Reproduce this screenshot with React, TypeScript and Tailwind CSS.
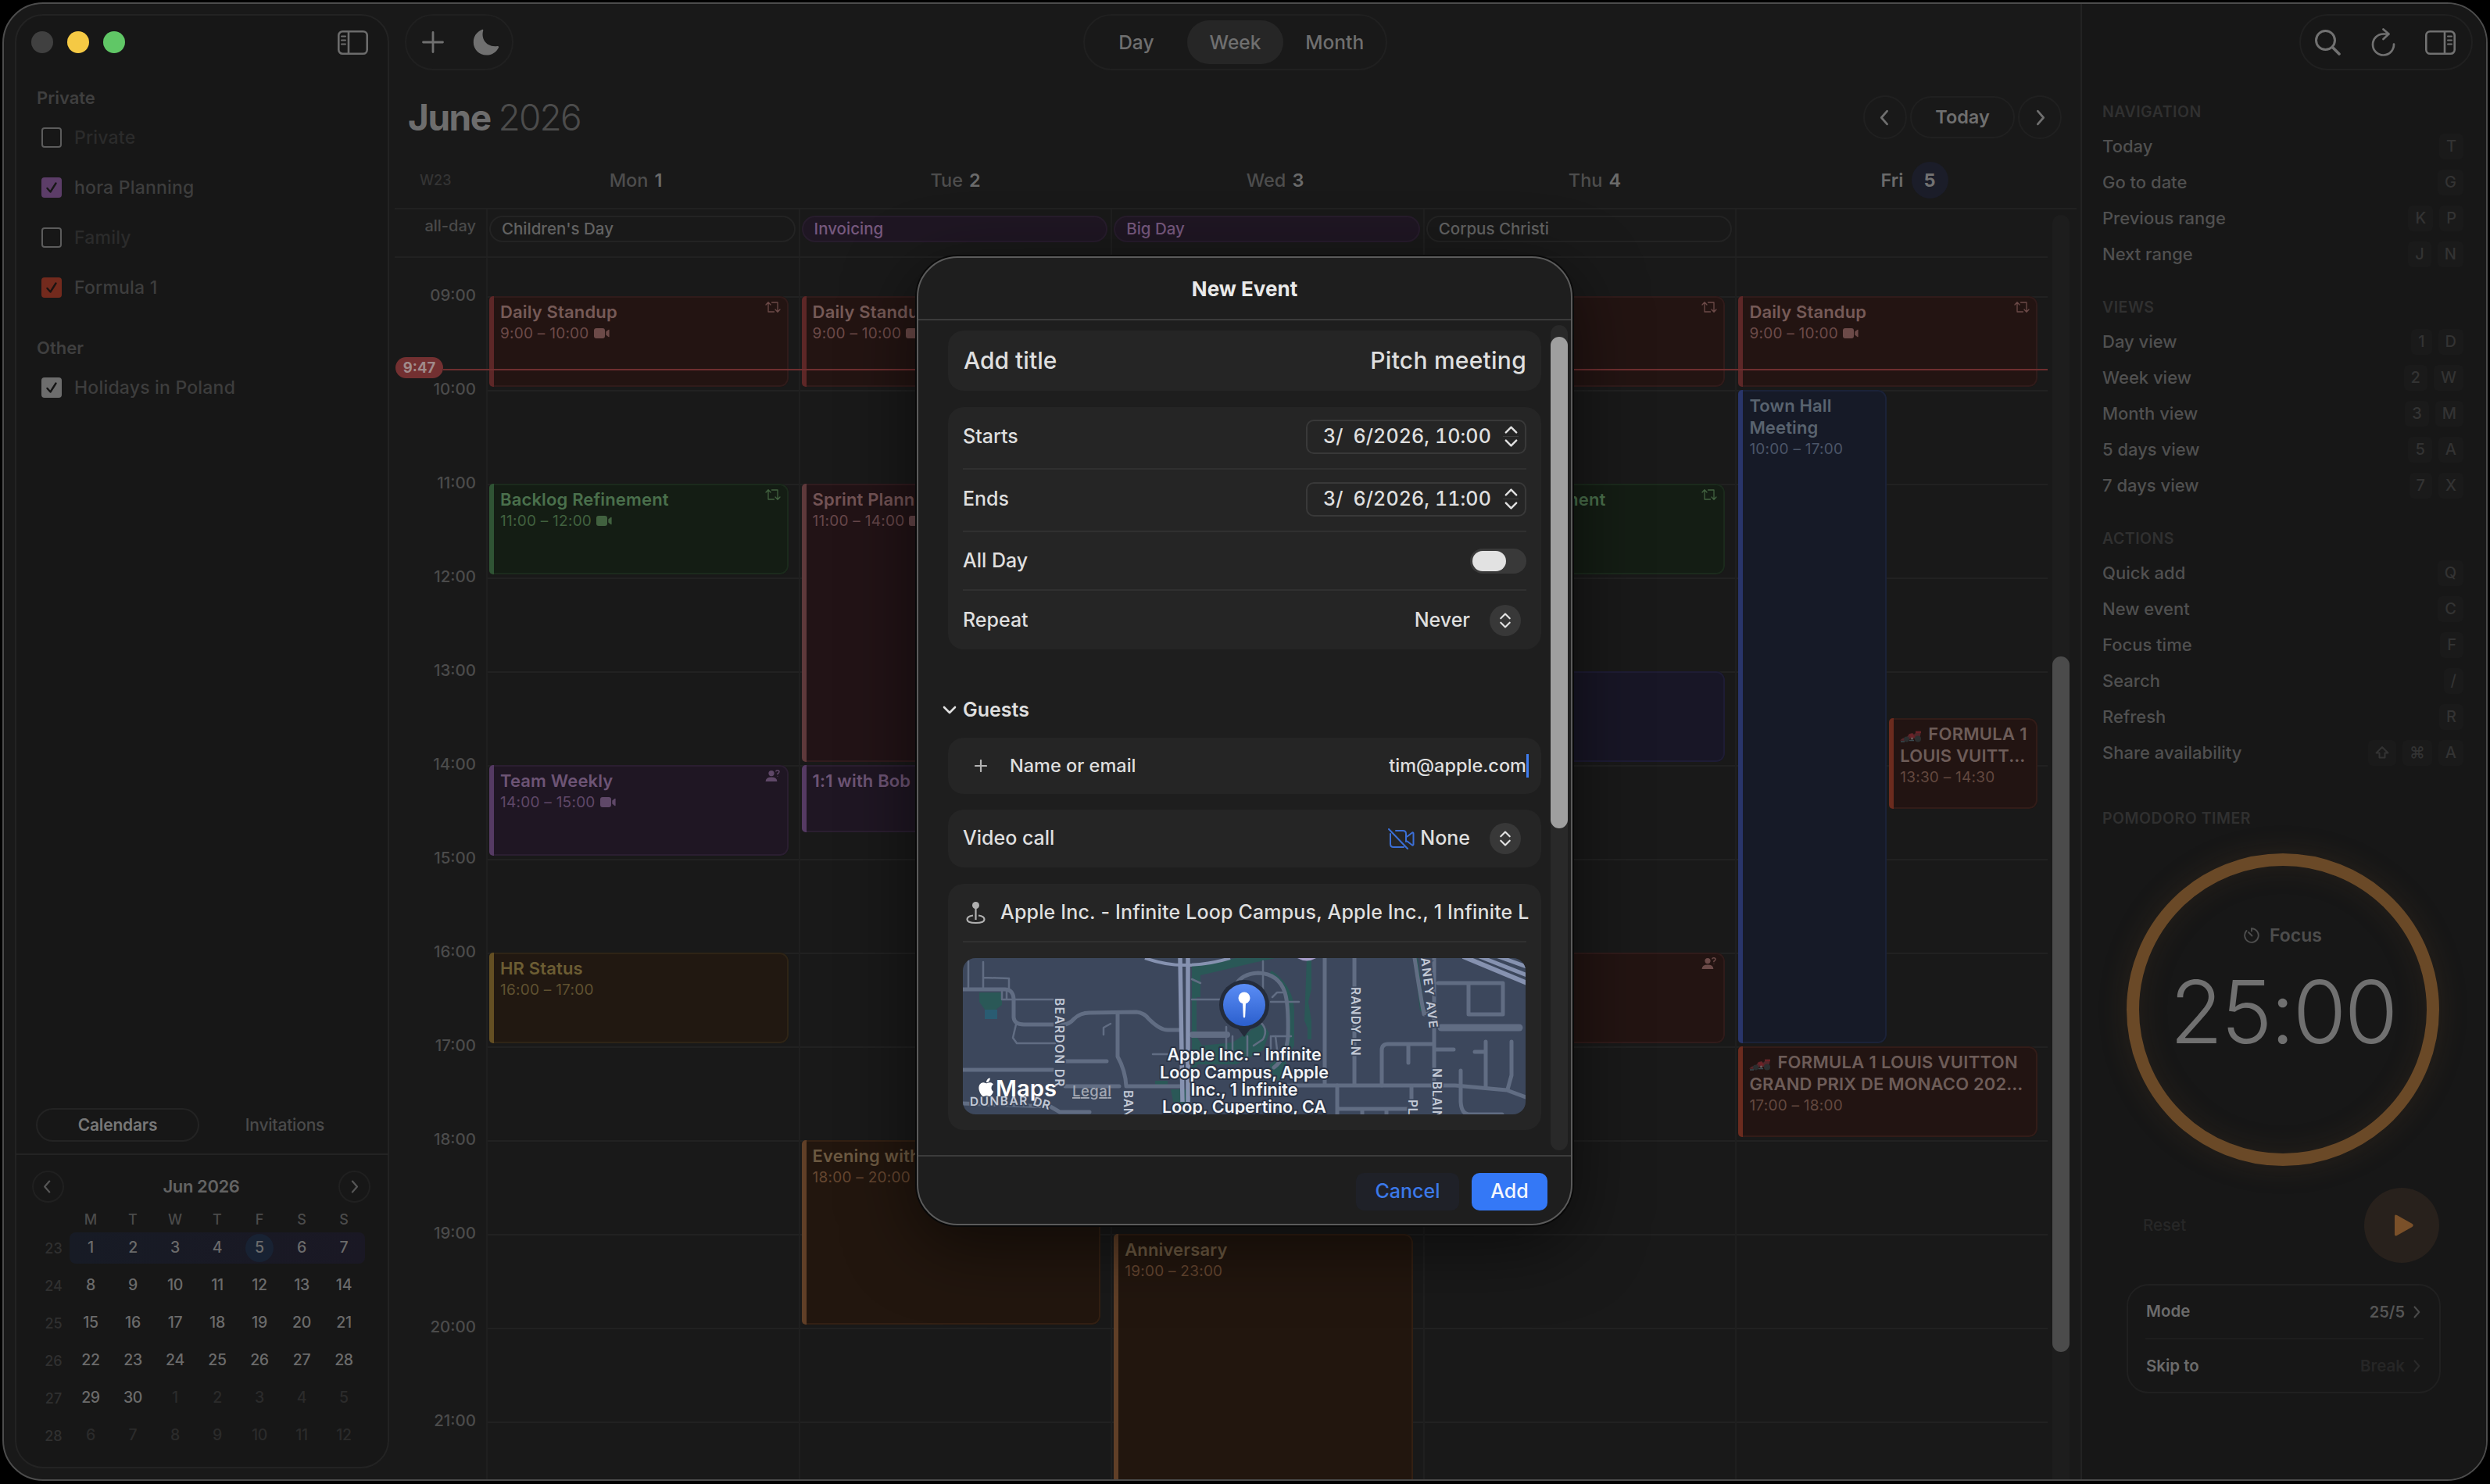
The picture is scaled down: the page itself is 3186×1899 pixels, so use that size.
import type { ReactNode } from 'react'

type Tone = {
  bg: string
  border: string
  bar: string
  title: string
  time: string
}

const TONES: Record<string, Tone> = {
  red: { bg: 'bg-[#231412]', border: 'border-[#301b1a]', bar: 'bg-[#5d2727]', title: 'text-[#765a57]', time: 'text-[#6c4a48]' },
  green: { bg: 'bg-[#141d14]', border: 'border-[#1b2a1c]', bar: 'bg-[#2f5434]', title: 'text-[#4a704c]', time: 'text-[#41613f]' },
  rose: { bg: 'bg-[#221316]', border: 'border-[#301b1e]', bar: 'bg-[#5e393b]', title: 'text-[#735355]', time: 'text-[#67474a]' },
  purple: { bg: 'bg-[#1f1623]', border: 'border-[#2a1e30]', bar: 'bg-[#553a63]', title: 'text-[#6d5475]', time: 'text-[#5f4868]' },
  yellow: { bg: 'bg-[#211811]', border: 'border-[#2e2416]', bar: 'bg-[#644f23]', title: 'text-[#6c5d33]', time: 'text-[#5f5130]' },
  orange: { bg: 'bg-[#22160e]', border: 'border-[#332013]', bar: 'bg-[#603f27]', title: 'text-[#6c5941]', time: 'text-[#654630]' },
  blue: { bg: 'bg-[#161a27]', border: 'border-[#1b2238]', bar: 'bg-[#29356a]', title: 'text-[#59636f]', time: 'text-[#4b5568]' },
  indigo: { bg: 'bg-[#181626]', border: 'border-[#1e1c34]', bar: 'bg-[#2b2860]', title: 'text-[#59597a]', time: 'text-[#4b4b68]' },
  f1: { bg: 'bg-[#221412]', border: 'border-[#321c18]', bar: 'bg-[#6b2b1e]', title: 'text-[#6d5c58]', time: 'text-[#62483f]' },
}

type CalEvent = {
  title: string
  /* second title line, cut with an ellipsis */
  more?: string
  time: string
  start: number
  hours: number
  tone: keyof typeof TONES
  half?: 'left' | 'right'
  video?: boolean
  badge?: 'repeat' | 'guest'
}

const DAYS: { name: string; num: string; allDay?: string; purple?: boolean; events: CalEvent[] }[] = [
  {
    name: 'Mon',
    num: '1',
    allDay: "Children's Day",
    events: [
      { title: 'Daily Standup', time: '9:00 – 10:00', start: 9, hours: 1, tone: 'red', video: true, badge: 'repeat' },
      { title: 'Backlog Refinement', time: '11:00 – 12:00', start: 11, hours: 1, tone: 'green', video: true, badge: 'repeat' },
      { title: 'Team Weekly', time: '14:00 – 15:00', start: 14, hours: 1, tone: 'purple', video: true, badge: 'guest' },
      { title: 'HR Status', time: '16:00 – 17:00', start: 16, hours: 1, tone: 'yellow' },
    ],
  },
  {
    name: 'Tue',
    num: '2',
    allDay: 'Invoicing',
    purple: true,
    events: [
      { title: 'Daily Standup', time: '9:00 – 10:00', start: 9, hours: 1, tone: 'red', video: true, badge: 'repeat' },
      { title: 'Sprint Planning', time: '11:00 – 14:00', start: 11, hours: 3, tone: 'rose', video: true },
      { title: '1:1 with Bob', time: '', start: 14, hours: 0.75, tone: 'purple' },
      { title: 'Evening with', time: '18:00 – 20:00', start: 18, hours: 2, tone: 'orange' },
    ],
  },
  {
    name: 'Wed',
    num: '3',
    allDay: 'Big Day',
    purple: true,
    events: [{ title: 'Anniversary', time: '19:00 – 23:00', start: 19, hours: 4, tone: 'orange' }],
  },
  {
    name: 'Thu',
    num: '4',
    allDay: 'Corpus Christi',
    events: [
      { title: 'Daily Standup', time: '9:00 – 10:00', start: 9, hours: 1, tone: 'red', badge: 'repeat' },
      { title: 'Backlog Refinement', time: '11:00 – 12:00', start: 11, hours: 1, tone: 'green', badge: 'repeat' },
      { title: '', time: '', start: 13, hours: 1, tone: 'indigo' },
      { title: '', time: '', start: 16, hours: 1, tone: 'red', badge: 'guest' },
    ],
  },
  {
    name: 'Fri',
    num: '5',
    events: [
      { title: 'Daily Standup', time: '9:00 – 10:00', start: 9, hours: 1, tone: 'red', video: true, badge: 'repeat' },
      { title: 'Town Hall Meeting', time: '10:00 – 17:00', start: 10, hours: 7, tone: 'blue', half: 'left' },
      { title: 'FORMULA 1', more: 'LOUIS VUITTON GRAND PRIX', time: '13:30 – 14:30', start: 13.5, hours: 1, tone: 'f1', half: 'right' },
      { title: 'FORMULA 1 LOUIS VUITTON', more: 'GRAND PRIX DE MONACO 2026 - Practice 2', time: '17:00 – 18:00', start: 17, hours: 1, tone: 'f1' },
    ],
  },
]

const HOURS = ['09:00', '10:00', '11:00', '12:00', '13:00', '14:00', '15:00', '16:00', '17:00', '18:00', '19:00', '20:00', '21:00']

const CALENDARS = [
  { group: 'Private', items: [
    { name: 'Private', box: 'border-2 border-[#5c5c5c]', text: 'text-[#2b2b2b]', tick: '' },
    { name: 'hora Planning', box: 'bg-[#5c3d68]', text: 'text-[#3d3d3d]', tick: '#181818' },
    { name: 'Family', box: 'border-2 border-[#5c5c5c]', text: 'text-[#2b2b2b]', tick: '' },
    { name: 'Formula 1', box: 'bg-[#732a1d]', text: 'text-[#3d3d3d]', tick: '#1c1412' },
  ] },
  { group: 'Other', items: [
    { name: 'Holidays in Poland', box: 'bg-[#6d6d6d]', text: 'text-[#3d3d3d]', tick: '#141414' },
  ] },
]

const WEEKS: [string, string[]][] = [
  ['23', ['1', '2', '3', '4', '5', '6', '7']],
  ['24', ['8', '9', '10', '11', '12', '13', '14']],
  ['25', ['15', '16', '17', '18', '19', '20', '21']],
  ['26', ['22', '23', '24', '25', '26', '27', '28']],
  ['27', ['29', '30', '1', '2', '3', '4', '5']],
  ['28', ['6', '7', '8', '9', '10', '11', '12']],
]

const SHORTCUTS: { title: string; rows: [string, string[]][] }[] = [
  { title: 'NAVIGATION', rows: [['Today', ['T']], ['Go to date', ['G']], ['Previous range', ['K', 'P']], ['Next range', ['J', 'N']]] },
  { title: 'VIEWS', rows: [['Day view', ['1', 'D']], ['Week view', ['2', 'W']], ['Month view', ['3', 'M']], ['5 days view', ['5', 'A']], ['7 days view', ['7', 'X']]] },
  { title: 'ACTIONS', rows: [['Quick add', ['Q']], ['New event', ['C']], ['Focus time', ['F']], ['Search', ['/']], ['Refresh', ['R']], ['Share availability', ['shift', 'cmd', 'A']]] },
]

function Chevron({ dir, className }: { dir: 'left' | 'right' | 'up' | 'down'; className: string }) {
  const d = {
    left: 'M13 3 L6 11 L13 19',
    right: 'M8 3 L15 11 L8 19',
    up: 'M4 15 L11 8 L18 15',
    down: 'M4 7 L11 14 L18 7',
  }[dir]
  return (
    <svg viewBox="0 0 22 22" className={className} fill="none" stroke="currentColor" strokeWidth="2.6" strokeLinecap="round" strokeLinejoin="round">
      <path d={d} />
    </svg>
  )
}

function PanelIcon({ side }: { side: 'left' | 'right' }) {
  const flip = side === 'right' ? 'scale-x-[-1]' : ''
  return (
    <svg viewBox="0 0 39 31" className={`w-[39px] h-[31px] ${flip}`} fill="none" stroke="currentColor" strokeWidth="2.6">
      <rect x="1.3" y="1.3" width="36.4" height="28.4" rx="5" />
      <path d="M14 1.3 V29.7" />
      <path d="M5 7.5 H10 M5 12.5 H10 M5 17.5 H10" strokeWidth="2" strokeLinecap="round" />
    </svg>
  )
}

function VideoIcon() {
  return (
    <svg viewBox="0 0 20 13" className="w-5 h-[13px]" fill="currentColor">
      <rect x="0" y="0" width="14" height="13" rx="3" />
      <path d="M15.3 4.6 L18.4 2 Q19.6 1.2 19.6 2.6 V10.4 Q19.6 11.8 18.4 11 L15.3 8.4 Z" />
    </svg>
  )
}

function RepeatIcon() {
  return (
    <svg viewBox="0 0 20 16" className="w-5 h-4" fill="none" stroke="currentColor" strokeWidth="1.3" strokeLinecap="round" strokeLinejoin="round">
      <path d="M1 5 L4 1.8 L7 5 M4 2 V14 H11.5" />
      <path d="M8.5 2 H16 V14 M13 11 L16 14.2 L19 11" />
    </svg>
  )
}

function GuestIcon() {
  return (
    <svg viewBox="0 0 20 16" className="w-5 h-4" fill="currentColor">
      <circle cx="8" cy="4.6" r="3.6" />
      <path d="M0.6 15 Q1 9.6 8 9.6 Q15 9.6 15.4 15 Z" />
      <path d="M13.6 2.4 Q14 0.8 15.8 0.8 Q18 0.8 18 2.6 Q18 4 15.9 5.2 V6.2 M15.9 8.2 V8.7" fill="none" stroke="currentColor" strokeWidth="1.5" />
    </svg>
  )
}

function CarIcon() {
  return (
    <svg viewBox="0 0 28 16" className="w-7 h-4 mr-[8px] mt-[9px] shrink-0">
      <path d="M0 13.5 L3 11 L9 9 L12 5 L16 4 L18 6 L20 4 V1.5 H27 L26.5 5 L25 11 H14 L6 14 Z" fill="#52262a" />
      <path d="M11 6 L16 4.5 L19 9 L15 11 Z M20 2 H27 V4 H20 Z" fill="#6b2227" />
      <circle cx="8.5" cy="12" r="3.4" fill="#2b2e2f" />
      <circle cx="23" cy="11.5" r="4" fill="#2b2e2f" />
      <circle cx="15.5" cy="11" r="1.5" fill="#6b5a5a" />
      <path d="M1 15 H6 M12 13.5 H18" stroke="#3b4a50" strokeWidth="1.5" />
    </svg>
  )
}

function EventCard({ event }: { event: CalEvent }) {
  const tone = TONES[event.tone]
  const column = event.half === 'left' ? 'col-start-1' : event.half === 'right' ? 'col-start-2' : 'col-span-2 col-start-1'
  const row = Math.round((event.start - 9) * 4) + 1
  return (
    <div
      className={`${column} ${tone.bg} flex min-w-0 mb-1 mr-[3px] rounded-l-[5px] rounded-r-[11px] overflow-hidden`}
      style={{ gridRow: `${row} / span ${event.hours * 4}` }}
    >
      <div className={`w-1.5 shrink-0 ${tone.bar}`} />
      <div className={`flex flex-1 min-w-0 pl-2 pr-2 pt-[3px] border-y-2 border-r-2 rounded-r-[11px] ${tone.border}`}>
        <div className="flex-1 min-w-0 pt-px">
          <div className={`text-[22px] leading-[28px] tracking-[0.15px] font-semibold ${tone.title}`}>
            {event.more ? (
              <>
                <div className="flex whitespace-nowrap tracking-[0.3px]"><CarIcon />{event.title}</div>
                <div className="truncate">{event.more}</div>
              </>
            ) : (
              event.title
            )}
          </div>
          <div className={`flex items-center gap-[6px] text-[19px] leading-[27px] tracking-[0.25px] ${tone.time}`}>
            {event.time}
            {event.video && <VideoIcon />}
          </div>
        </div>
        {event.badge && (
          <div className={`shrink-0 pt-px ${tone.time}`}>{event.badge === 'repeat' ? <RepeatIcon /> : <GuestIcon />}</div>
        )}
      </div>
    </div>
  )
}

function Sidebar() {
  return (
    <aside className="flex flex-col w-[479px] h-[1861px] mt-[13px] ml-[14px] shrink-0 rounded-[36px] border-2 border-[#232323] bg-[#171717]">
      <div className="flex items-center h-[68px] pl-[19px] pr-[25px]">
        <div className="size-7 rounded-full bg-[#404040]" />
        <div className="size-7 ml-[18px] rounded-full bg-[#f5c944]" />
        <div className="size-7 ml-[18px] rounded-full bg-[#60c766]" />
        <div className="ml-auto text-[#6c6c6c]"><PanelIcon side="left" /></div>
      </div>
      <div className="flex-1 pl-[26px]">
        {CALENDARS.map((section, i) => (
          <div key={section.group} className={i === 0 ? 'pt-[19px]' : 'pt-[27px]'}>
            <div className="h-[37px] leading-9 text-[22px] font-semibold text-[#3f3f3f]">{section.group}</div>
            {section.items.map((item) => (
              <div key={item.name} className="flex items-center h-16 pl-[6px]">
                <div className={`flex items-center justify-center size-[26px] rounded-[4px] ${item.box}`}>
                  {item.tick && (
                    <svg viewBox="0 0 26 26" className="size-[26px]" fill="none" stroke={item.tick} strokeWidth="2.4" strokeLinecap="round" strokeLinejoin="round">
                      <path d="M7.5 14 L11.5 18.5 L18.5 7.5" />
                    </svg>
                  )}
                </div>
                <span className={`ml-4 text-[23px] tracking-[0.2px] font-medium ${item.text}`}>{item.name}</span>
              </div>
            ))}
          </div>
        ))}
      </div>
      <div className="flex items-center h-[58px] pb-[18px] pl-[25px] pr-[22px] text-[21px] border-b-2 border-[#232323] leading-none">
        <div className="flex items-center justify-center w-[209px] h-[43px] shrink-0 rounded-full border-2 border-[#232323] font-semibold text-[#787878] tracking-[-0.2px]">Calendars</div>
        <div className="flex-1 text-center font-medium text-[#4a4a4a] tracking-[-0.2px]">Invitations</div>
      </div>
      <div className="h-[399px] pt-[20px] pl-5">
        <div className="flex items-center justify-between w-[433px]">
          <div className="flex items-center justify-center size-[41px] rounded-full border-2 border-[#202020] text-[#565656]"><Chevron dir="left" className="size-[19px]" /></div>
          <div className="text-[22px] font-semibold text-[#636363] tracking-[-0.4px]">Jun 2026</div>
          <div className="flex items-center justify-center size-[41px] rounded-full border-2 border-[#202020] text-[#565656]"><Chevron dir="right" className="size-[19px]" /></div>
        </div>
        <div className="flex h-[34px] pt-2 pl-[48px] text-[18px] font-medium text-[#4b4b4b] items-center">
          {['M', 'T', 'W', 'T', 'F', 'S', 'S'].map((d, i) => (
            <div key={i} className="w-[54px] text-center">{d}</div>
          ))}
        </div>
        {WEEKS.map(([week, days], w) => (
          <div key={week} className="flex items-center h-12">
            <div className="w-[48px] pl-[7px] text-center text-[18px] text-[#303030] font-medium">{week}</div>
            <div className={`flex items-center h-10 rounded-lg ${w === 0 ? 'bg-linear-to-r from-[#171b25] to-[#1a1824]' : ''}`}>
              {days.map((day, i) => {
                const outside = (w === 4 && i > 1) || w === 5
                const today = w === 0 && i === 4
                return (
                  <div key={i} className="flex justify-center w-[54px]">
                    <div className={`flex items-center justify-center size-9 rounded-full text-[19.5px] font-medium tracking-[-0.3px] ${today ? 'bg-[#182233]' : ''} ${outside ? 'text-[#2b2b2b]' : 'text-[#6b6b6b]'}`}>
                      {day}
                    </div>
                  </div>
                )
              })}
            </div>
          </div>
        ))}
      </div>
    </aside>
  )
}

function Calendar() {
  return (
    <main className="flex flex-col w-[2164px] shrink-0 overflow-hidden">
      <div className="flex pt-[13px] pl-[20px]">
        <div className="flex items-center w-[139px] h-[72px] pl-5 gap-[37px] rounded-full border-2 border-[#202020] text-[#707070]">
          <svg viewBox="0 0 28 28" className="size-7" fill="none" stroke="currentColor" strokeWidth="2.8" strokeLinecap="round">
            <path d="M14 1.5 V26.5 M1.5 14 H26.5" />
          </svg>
          <svg viewBox="0 0 34 34" className="size-[34px]" fill="currentColor">
            <path d="M11.5 1 C12.8 0.3 13.6 1 13.2 2.3 C10.3 12.5 17 23.8 31.2 22 C33 21.8 33.6 22.7 32.8 24.2 C29.8 30 24.3 33.5 17.5 33.5 C8 33.5 0.8 26.3 0.8 17 C0.8 9.8 4.8 3.8 11.5 1 Z" />
          </svg>
        </div>
        <div className="flex items-center w-[389px] h-[72px] ml-[729px] pl-1 rounded-full border-2 border-[#202020] text-[24.5px] font-medium text-[#6f6f6f]">
          <div className="w-[124px] text-center">Day</div>
          <div className="flex items-center justify-center w-[124px] h-14 ml-[3px] rounded-full bg-[#262626]">Week</div>
          <div className="w-[131px] text-center">Month</div>
        </div>
      </div>
      <div className="flex items-center h-14 mt-8 pl-6">
        <h1 className="text-[46px] font-bold tracking-[-1.5px] text-[#6d6d6d]">June</h1>
        <span className="ml-[10px] text-[46px] font-light tracking-[-1.8px] text-[#4c4c4c]">2026</span>
        <div className="flex items-center ml-auto mr-[24px] gap-1 text-[#6f6f6f]">
          <div className="flex items-center justify-center size-14 rounded-full border-2 border-[#202020]"><Chevron dir="left" className="size-[23px]" /></div>
          <div className="flex items-center justify-center w-[134px] h-[54px] rounded-full border-2 border-[#202020] text-[23.5px] font-semibold">Today</div>
          <div className="flex items-center justify-center size-14 rounded-full border-2 border-[#202020]"><Chevron dir="right" className="size-[23px]" /></div>
        </div>
      </div>
      <div className="flex items-center h-[73px] mt-[17px] ml-[7px] mr-[5px] pr-[3px] border-b-2 border-[#212121]">
        <div className="w-[104px] pl-8 text-[18px] font-medium text-[#343434]">W23</div>
        <div className="grid grid-cols-5 flex-1 text-[23.5px]">
          {DAYS.map((day) => (
            <div key={day.name} className="flex items-center justify-center gap-2">
              {day.allDay ? (
                <>
                  <span className="font-medium text-[#4d4d4d]">{day.name}</span>
                  <span className="font-semibold text-[#6a6a6a]">{day.num}</span>
                </>
              ) : (
                <>
                  <span className="font-semibold text-[#6a6a6a]">{day.name}</span>
                  <span className="flex items-center justify-center size-[47px] ml-0.5 rounded-full bg-[#1b1d29] font-bold text-[#727272]">{day.num}</span>
                </>
              )}
            </div>
          ))}
        </div>
      </div>
      <div className="flex flex-1 min-h-0 pl-[7px]">
        <div className="flex flex-col w-[2115px] shrink-0">
          <div className="flex h-[62px] border-b-2 border-[#212121]">
            <div className="w-[117px] pr-[13px] pt-2 text-right text-[20px] leading-[26px] font-medium text-[#4a4a4a]">all-day</div>
            <div className="grid grid-cols-5 flex-1">
              {DAYS.map((day) => (
                <div key={day.name} className="border-l-2 border-[#1f1f1f] pt-2 pl-0.5 pr-1">
                  {day.allDay && (
                    <div className={`flex items-center h-[34px] pl-3.5 rounded-full border-2 text-[20.5px] font-medium ${day.purple ? 'bg-[#1f1623] border-[#271c2c] text-[#76587d]' : 'border-[#232323] text-[#626262]'}`}>
                      {day.allDay}
                    </div>
                  )}
                </div>
              ))}
            </div>
          </div>
          <div className="relative flex flex-1 min-h-0 overflow-hidden">
            <div className="w-[117px] pt-9 pr-[13px] shrink-0 text-right">
              {HOURS.map((hour) => (
                <div key={hour} className="h-[120px] text-[20.5px] leading-6 font-medium text-[#4b4b4b]">{hour}</div>
              ))}
            </div>
            {/* hour lines and day columns share one grid cell */}
            <div className="grid flex-1">
              <div className="col-start-1 row-start-1 pt-[49px]">
                {HOURS.map((hour) => (
                  <div key={hour} className="h-[120px] border-t-2 border-[#212121]" />
                ))}
              </div>
              <div className="col-start-1 row-start-1 grid grid-cols-5">
                {DAYS.map((day) => (
                  <div key={day.name} className="border-l-2 border-[#1f1f1f] pt-[49px] pl-0.5 pr-[10px]">
                    <div className="grid grid-cols-2 auto-rows-[30px]">
                      {day.events.map((event) => (
                        <EventCard key={event.start} event={event} />
                      ))}
                    </div>
                  </div>
                ))}
              </div>
            </div>
            <div className="absolute left-px right-0 top-[127px] flex items-center h-[27px]">
              <div className="flex items-center justify-center w-[61px] h-[27px] rounded-full bg-[#733031] text-[18.5px] font-bold text-[#a08b8b]">9:47</div>
              <div className="flex-1 h-0.5 mt-[5px] bg-[#6e2e2f]" />
            </div>
          </div>
        </div>
        <div className="w-[22px] mt-[7px] ml-[6px] pt-[565px] rounded-t-full bg-[#1d1d1d]">
          <div className="h-[890px] rounded-full bg-[#4b4b4b]" />
        </div>
      </div>
    </main>
  )
}

function KeyCap({ label }: { label: string }) {
  let content: ReactNode = label
  if (label === 'shift') {
    content = (
      <svg viewBox="0 0 18 18" className="w-[18px] h-[18px]" fill="none" stroke="currentColor" strokeWidth="2" strokeLinejoin="round">
        <path d="M9 2 L16.5 9.5 H12.5 V15.5 H5.5 V9.5 H1.5 Z" />
      </svg>
    )
  }
  if (label === 'cmd') content = '⌘'
  return (
    <div className="flex items-center justify-center h-[33px] px-[9px] rounded-md bg-[#1a1a1a] text-[20px] font-medium text-[#333333]">{content}</div>
  )
}

function RightPanel() {
  return (
    <aside className="flex flex-col flex-1 border-l-2 border-[#232323] bg-[#171717]">
      <div className="flex items-center justify-between self-end w-[222px] h-[72px] mt-[13px] mr-[17px] pl-[18px] pr-5 rounded-full border-2 border-[#202020] text-[#717171]">
        <svg viewBox="0 0 33 33" className="size-[33px]" fill="none" stroke="currentColor" strokeWidth="3" strokeLinecap="round">
          <circle cx="13.5" cy="13.5" r="12" />
          <path d="M22.5 22.5 L31 31" strokeWidth="3.6" />
        </svg>
        <svg viewBox="0 0 31 36" className="w-[31px] h-9" fill="none" stroke="currentColor" strokeWidth="2.7" strokeLinecap="round" strokeLinejoin="round">
          <path d="M29 20.5 A13.5 13.5 0 1 1 15.5 7.5 L22 7.5" />
          <path d="M15.5 1.5 L22.5 7.5 L15.5 14" />
        </svg>
        <PanelIcon side="right" />
      </div>
      <div className="flex flex-col gap-[29px] pt-[37px] pl-[26px] pr-[29px]">
        {SHORTCUTS.map((section) => (
          <div key={section.title}>
            <div className="h-[37px] leading-8 text-[19.5px] font-semibold tracking-[0.5px] text-[#303030]">{section.title}</div>
            {section.rows.map(([label, keys]) => (
              <div key={label} className="flex items-center justify-between h-[46px]">
                <span className="text-[22px] font-medium text-[#505050]">{label}</span>
                <div className="flex gap-2">
                  {keys.map((key) => <KeyCap key={key} label={key} />)}
                </div>
              </div>
            ))}
          </div>
        ))}
      </div>
      <div className="mt-[45px] pl-[26px] leading-8 text-[19.5px] font-semibold tracking-[0.5px] text-[#303030]">POMODORO TIMER</div>
      <div className="flex flex-col items-center size-[400px] mt-[29px] ml-[57px] rounded-full border-[16px] border-[#6a4927] shadow-[0_0_36px_rgba(106,73,39,0.220),inset_0_0_36px_rgba(106,73,39,0.180)]">
        <div className="flex items-center gap-[13px] mt-[73px] text-[23px] leading-8 font-semibold text-[#4d4d4d]">
          <svg viewBox="0 0 20 20" className="size-5" fill="none" stroke="currentColor" strokeWidth="1.9" strokeLinecap="round">
            <path d="M10 1.2 A8.8 8.8 0 1 1 3.5 4" />
            <path d="M10 1.2 V4.5 M6 6 L10.5 10.5" />
          </svg>
          Focus
        </div>
        <div className="mt-[26px] text-[111px] leading-[112px] font-light tracking-[-2.6px] text-[#707070]">25:00</div>
      </div>
      <div className="flex items-center justify-between h-24 mt-7 ml-[57px] w-[400px] pl-[21px]">
        <span className="text-[20.5px] font-medium text-[#272727]">Reset</span>
        <div className="flex items-center justify-center size-24 rounded-full bg-[#28211c]">
          <svg viewBox="0 0 24 28" className="w-6 h-7 ml-1.5" fill="#7a5029">
            <path d="M0 2.5 Q0 -0.5 3 1 L22.5 12 Q25 14 22.5 16 L3 27 Q0 28.5 0 25.5 Z" />
          </svg>
        </div>
      </div>
      <div className="w-[402px] h-[140px] mt-[27px] ml-[57px] pl-[22px] pr-5 rounded-[28px] border-2 border-[#202020] text-[20.5px] font-semibold">
        <div className="flex items-center h-[69px] border-b-2 border-[#1d1d1d] text-[#6b6b6b]">
          <span className="pl-px">Mode</span>
          <span className="ml-auto text-[#555555] text-[20px]">25/5</span>
          <Chevron dir="right" className="size-[18px] ml-1.5 text-[#4a4a4a]" />
        </div>
        <div className="flex items-center h-[68px] text-[#6b6b6b]">
          <span className="pl-px">Skip to</span>
          <span className="ml-auto text-[#262626]">Break</span>
          <Chevron dir="right" className="size-[18px] ml-1.5 text-[#2a2a2a]" />
        </div>
      </div>
    </aside>
  )
}

function Stepper() {
  return (
    <div className="flex flex-col items-center justify-center size-10 mr-[7px] rounded-full bg-[#383838] text-[#e4e4e4]">
      <Chevron dir="up" className="size-[18px] -mb-[3px]" />
      <Chevron dir="down" className="size-[18px] -mt-[3px]" />
    </div>
  )
}

function DateField({ value }: { value: string }) {
  return (
    <div className="flex items-center w-[282px] h-11 pl-[20px] pr-[8px] rounded-[10px] border-2 border-[#393939] tabular-nums">
      <span>3/</span>
      <span className="ml-[13px] tracking-[0.1px]">{value}</span>
      <div className="flex flex-col items-center ml-auto w-5">
        <Chevron dir="up" className="size-[21px] -mb-0.5" />
        <div className="w-5 h-px bg-[#3c3c3c]" />
        <Chevron dir="down" className="size-[21px] -mt-0.5" />
      </div>
    </div>
  )
}

function MapPreview() {
  return (
    <svg viewBox="0 0 720 200" className="w-[720px] h-[200px] rounded-2xl" fontFamily="Inter, sans-serif">
      <defs>
        <linearGradient id="pin" x1="0" y1="0" x2="0" y2="1">
          <stop offset="0" stopColor="#5b8df5" />
          <stop offset="1" stopColor="#2b5fcd" />
        </linearGradient>
      </defs>
      <rect width="720" height="200" fill="#3c475c" />
      {/* parks */}
      <g fill="#2a5857">
        <path d="M21 44 H50 V60 L42 66 H28 L21 56 Z" />
        <path d="M293 10 L350 0 H400 L372 6 L330 16 L304 22 V50 H299 V100 L306 112 L345 108 L372 90 L384 84 L392 96 L384 118 L350 136 H300 L293 160 Z" />
        <path d="M266 168 H290 V198 H272 Z M392 136 L412 124 L416 150 L400 158 Z" />
        <path d="M246 157 H262 V166 H246 Z" />
        <path d="M395 16 Q422 34 424 66 V112 L412 132 L406 124 L416 100 V60 Q412 34 392 20 Z" />
        <path d="M440 0 H446 V40 L442 56 L446 80 V104 H441 V90 L437 80 Z" />
        <path d="M577 0 H582 L591 68 H585 Z" />
      </g>
      <rect x="28" y="66" width="16" height="12" fill="#2a5c72" />
      {/* streets */}
      <g fill="none" stroke="#616d83" strokeLinecap="round" strokeLinejoin="round">
        <g strokeWidth="5">
          <path d="M0 40 H54 Q64 40 65 52 V76 Q66 85 78 85 H128 Q136 85 142 78 Q150 70 162 70 L222 69 Q232 70 238 78 Q252 92 262 92 H277" />
          <path d="M198 71 V126 Q208 144 209 164 M131 132 H184 M0 143 H115 M131 164 H200 M209 164 H278" />
          <path d="M463 0 V163 M501 0 V163 M414 163 H630 L696 169 L720 178" />
          <path d="M348 36 Q356 20 378 19 Q404 20 412 44 Q417 60 416 100 Q414 128 398 140" />
          <path d="M603 0 V196 M608 32 H691 V72 H647 V32 M536 163 V118 Q536 110 544 110 H603 M570 110 V134 M606 117 H628" />
          <path d="M669 107 V166 M655 120 H668 M702 107 V150 L697 168 M637 144 V184 Q638 200 648 200 H690" />
          <path d="M479 163 V200 M479 193 H568 M511 194 V200 M542 194 V200 M574 164 V186" />
          <path d="M578 0 Q584 40 590 72 L600 60" />
          <path d="M0 186 L112 190 L124 197 H162" />
        </g>
        <path d="M294 98 H338" strokeWidth="8" />
        <path d="M612 89 H712" strokeWidth="9" />
        <g strokeWidth="2.5">
          <path d="M7 4 V38 M26 5 V38 M26 25 L59 26 V40 M50 41 V53 H116 M56 41 V53 M68 85 L64 102 L69 109 H118 M180 98 L180 89 L189 84" />
          <path d="M293 53 H334 M293 27 L304 32 M384 4 V40 M394 56 H430 M396 100 H420 M394 100 V124 M243 123 H262 M396 50 L402 44 H410" />
          <path d="M337 88 V120 M345 100 V122 M364 100 V126 M378 80 Q392 90 384 104 L372 112 M400 100 L404 134" />
        </g>
      </g>
      {/* main roads */}
      <g fill="none" stroke="#8692b0">
        <path d="M278 0 L281 184 M288 0 V184" strokeWidth="5.5" />
        <path d="M233 0 Q262 10 288 9 Q316 8 342 0" strokeWidth="4" />
        <path d="M640 -2 L722 32" strokeWidth="6" />
        <path d="M656 -4 L722 22 M674 -6 L724 12" strokeWidth="5" />
      </g>
      <path d="M428 0 Q440 7 452 0 Z" fill="#a59cc8" />
      {/* street names */}
      <g fill="#c3c9d6" stroke="#3c475c" strokeWidth="3.5" paintOrder="stroke" fontSize="15.5" fontWeight="600" letterSpacing="0.6">
        <text transform="translate(118 51) rotate(90)" textLength="114">BEARDON DR</text>
        <text transform="translate(497 37) rotate(90)" textLength="88">RANDY LN</text>
        <text transform="translate(586 0) rotate(83)" textLength="91">ANEY AVE</text>
        <text transform="translate(601 141) rotate(90)">N BLAINEY</text>
        <text transform="translate(206 169) rotate(90)">BANDLEY</text>
        <text transform="translate(570 181) rotate(90)">PLUM</text>
        <text transform="translate(9 189) rotate(-1)" textLength="74">DUNBAR</text>
        <text transform="translate(89 188) rotate(16)">DR</text>
      </g>
      {/* attribution */}
      <g fill="#ffffff">
        <path d="M36.5 166 C36.5 163 38.8 161.6 39 161.5 C37.5 159.4 35.3 159.2 34.5 159.2 C32.6 159 31 160.3 30 160.3 C29.1 160.3 27.7 159.2 26.2 159.3 C24.2 159.3 22.4 160.4 21.4 162.1 C19.3 165.7 20.9 171 22.9 174 C23.9 175.4 25 177 26.5 176.9 C28 176.9 28.5 176 30.3 176 C32 176 32.5 176.9 34 176.9 C35.5 176.9 36.5 175.5 37.5 174 C38.6 172.4 39.1 170.8 39.1 170.7 C39.1 170.7 36.5 169.6 36.5 166 Z" />
        <path d="M33.6 157.4 C34.4 156.4 35 155 34.8 153.6 C33.6 153.7 32.1 154.4 31.3 155.4 C30.5 156.3 29.9 157.7 30 159 C31.4 159.1 32.8 158.4 33.6 157.4 Z" />
        <text x="42" y="177" fontSize="28" fontWeight="600" textLength="78" lengthAdjust="spacingAndGlyphs">Maps</text>
      </g>
      <text x="140" y="177" fontSize="18.5" fontWeight="500" fill="#a3a8b3" textDecoration="underline" textLength="50">Legal</text>
      {/* pin */}
      <path d="M352 90 L360 101 L368 90 Z" fill="#242c3b" />
      <circle cx="360" cy="60" r="32" fill="#242c3b" />
      <circle cx="360" cy="60" r="27" fill="url(#pin)" />
      <circle cx="360" cy="51" r="7.5" fill="#ffffff" />
      <path d="M358 57 H362 L361.2 75 Q360 78 358.8 75 Z" fill="#ffffff" />
      <g fill="#f2f4f7" stroke="#2b3446" strokeWidth="4" paintOrder="stroke" strokeLinejoin="round" fontSize="21.5" fontWeight="600" textAnchor="middle">
        <text x="360" y="131">Apple Inc. - Infinite</text>
        <text x="360" y="153.500">Loop Campus, Apple</text>
        <text x="360" y="175.500">Inc., 1 Infinite</text>
        <text x="360" y="198">Loop, Cupertino, CA</text>
      </g>
    </svg>
  )
}

function Modal() {
  return (
    <div className="absolute left-[1168px] top-[323px] flex flex-col w-[839px] h-[1240px] rounded-[52px] border-2 border-[#5b5b5b] bg-[#1e1e1e] shadow-[0_24px_90px_rgba(0,0,0,0.550),0_0_0_2px_#0c0c0c] text-[25px] font-medium text-[#dfdfdf]">
      <div className="flex items-center justify-center h-[80px] shrink-0 border-b-2 border-[#3b3b3b] text-[26px] font-bold text-[#e9e9e9]">New Event</div>
      <div className="flex flex-1 min-h-0 pl-[38px]">
        <div className="w-[759px] pt-[13px] shrink-0">
          <div className="flex items-center justify-between h-[77px] pl-5 pr-[19px] rounded-[20px] bg-[#252525] text-[30px]">
            <span>Add title</span>
            <span className="tracking-[0.25px]">Pitch meeting</span>
          </div>
          <div className="h-[310px] mt-[21px] px-[19px] rounded-[20px] bg-[#252525]">
            <div className="flex items-center justify-between h-20 pb-[3px] border-b-2 border-[#303030]">
              Starts
              <DateField value="6/2026, 10:00" />
            </div>
            <div className="flex items-center justify-between h-20 pb-[3px] border-b-2 border-[#303030]">
              Ends
              <DateField value="6/2026, 11:00" />
            </div>
            <div className="flex items-center justify-between h-[75px] border-b-2 border-[#303030]">
              All Day
              <div className="flex items-center w-[72px] h-8 pl-[3px] rounded-full bg-[#393939]">
                <div className="w-[43px] h-[26px] rounded-full bg-[#e2e2e2]" />
              </div>
            </div>
            <div className="flex items-center h-[75px]">
              Repeat
              <span className="ml-auto mr-[25px]">Never</span>
              <Stepper />
            </div>
          </div>
          <div className="flex items-center h-9 mt-[60px] -ml-[9px] font-semibold">
            <Chevron dir="down" className="size-[22px] mr-[6px]" />
            Guests
          </div>
          <div className="flex items-center h-[72px] mt-[17px] pl-[34px] pr-[16px] rounded-[20px] bg-[#252525] text-[23.5px]">
            <svg viewBox="0 0 16 16" className="size-4" fill="none" stroke="#b4b4b4" strokeWidth="2.2" strokeLinecap="round">
              <path d="M8 1 V15 M1 8 H15" />
            </svg>
            <span className="ml-[29px]">Name or email</span>
            <span className="ml-auto">tim@apple.com</span>
            <div className="w-[3px] h-[30px] bg-[#3f7ef2]" />
          </div>
          <div className="flex items-center h-[74px] mt-5 px-[19px] rounded-[20px] bg-[#252525]">
            Video call
            <svg viewBox="0 0 34 27" className="w-[34px] h-[27px] ml-auto mr-[7px]" fill="none" stroke="#3b6fd6" strokeWidth="2" strokeLinecap="round" strokeLinejoin="round">
              <path d="M10 3 H19 Q23 3 23 7 V17 M20 24 H7 Q3 24 3 20 V7 M24.5 10.5 L31 5.5 Q32.5 5 32.5 6.5 V20.5 Q32.5 22 31 21.5 L24.5 16.5" />
              <path d="M1 1 L25 26" />
            </svg>
            <span className="mr-[25px]">None</span>
            <Stepper />
          </div>
          <div className="h-[315px] mt-[21px] px-[19px] rounded-[20px] bg-[#252525]">
            <div className="flex items-center h-[75px] border-b-2 border-[#303030]">
              <svg viewBox="0 0 26 30" className="w-[26px] h-[30px] ml-1 shrink-0" fill="none" stroke="#b0b0b0" strokeWidth="2.2">
                <circle cx="12.5" cy="5.5" r="4.5" fill="#b0b0b0" stroke="none" />
                <path d="M12.5 9 V24" />
                <path d="M9 18.5 Q1.5 19.5 1.5 23.5 Q1.5 28 12.5 28 Q23.5 28 23.5 23.5 Q23.5 19.5 16 18.5" />
              </svg>
              <span className="ml-[18px] pt-px whitespace-nowrap tracking-[0.17px]">Apple Inc. - Infinite Loop Campus, Apple Inc., 1 Infinite L</span>
            </div>
            <div className="pt-5"><MapPreview /></div>
          </div>
        </div>
        <div className="w-[22px] mt-[6px] mb-[6px] ml-[12px] pt-[15px] rounded-full bg-[#292929]">
          <div className="h-[629px] rounded-full bg-[#9f9f9f]" />
        </div>
      </div>
      <div className="flex justify-end h-[88px] shrink-0 pt-[21px] pr-[30px] gap-4 border-t-2 border-[#3b3b3b]">
        <div className="flex items-center justify-center w-[132px] h-12 rounded-[10px] bg-[#1f2128] text-[#3b79ea]">Cancel</div>
        <div className="flex items-center justify-center w-[97px] h-12 rounded-[10px] bg-[#3478f6] text-[#f4f7fd]">Add</div>
      </div>
    </div>
  )
}

export default function App() {
  return (
    <div className="w-[3186px] h-[1899px] p-[3px] bg-black overflow-hidden font-[Inter,'Liberation_Sans',sans-serif]">
      <div className="relative flex w-[3180px] h-[1892px] rounded-[52px] border-2 border-[#4c4c4c] bg-[#191919] overflow-hidden">
        <Sidebar />
        <Calendar />
        <RightPanel />
        <Modal />
      </div>
    </div>
  )
}
